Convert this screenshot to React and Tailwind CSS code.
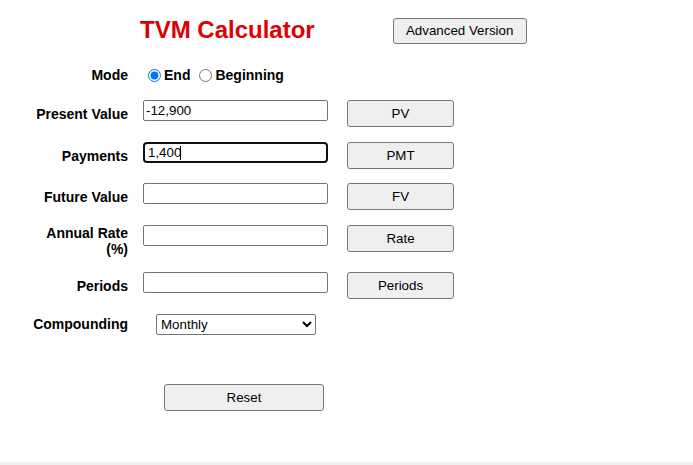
import { useState } from 'react'

const font = { fontFamily: '"Liberation Sans", Arial, sans-serif' }

function Field({ label, value, onChange, button, focused, className = '' }) {
  return (
    <div className={`flex items-start ${className}`}>
      <div className="w-[98px] self-stretch flex items-center justify-end text-right font-bold text-[14px] leading-4 text-black">
        {label}
      </div>
      <div className="relative ml-[15px] flex">
        <input
          type="text"
          value={value}
          onChange={(e) => onChange(e.target.value)}
          className={`block w-[185px] h-[21px] px-[2px] text-[13.33px] text-black bg-white outline-none ${
            focused ? 'border-2 border-[#101010] rounded-[4px] px-[3px]' : 'border border-[#767676] rounded-[2px]'
          }`}
        />
        {focused && <span className="absolute left-[37px] top-[4px] w-px h-[14px] bg-black" />}
      </div>
      <button className="ml-[19px] w-[107px] h-[27px] bg-[#efefef] border border-[#767676] rounded-[3px] text-[13.33px] text-black">
        {button}
      </button>
    </div>
  )
}

export default function App() {
  const [pv, setPv] = useState('-12,900')
  const [pmt, setPmt] = useState('1,400')
  const [fv, setFv] = useState('')
  const [rate, setRate] = useState('')
  const [periods, setPeriods] = useState('')
  const [mode, setMode] = useState('end')

  return (
    <div className="h-[465px] w-[693px] bg-white flex flex-col" style={font}>
      <div className="flex-1 pl-[30px] pt-[16px]">
        <div className="flex items-start">
          <h1 className="ml-[110px] text-[24px] leading-7 font-bold text-[#e00000]">TVM Calculator</h1>
          <button className="ml-[78px] mt-[2px] w-[134px] h-[26px] bg-[#efefef] border border-[#767676] rounded-[3px] text-[13.33px] text-black">
            Advanced Version
          </button>
        </div>

        <div className="mt-[23px] flex items-center h-4">
          <div className="w-[98px] text-right font-bold text-[14px] leading-4">Mode</div>
          <label className="ml-[15px] flex items-center font-bold text-[14px]">
            <input
              type="radio"
              name="mode"
              checked={mode === 'end'}
              onChange={() => setMode('end')}
              className="ml-[5px] mr-[3px] w-[13px] h-[13px]"
            />
            End
          </label>
          <label className="ml-[4px] flex items-center font-bold text-[14px]">
            <input
              type="radio"
              name="mode"
              checked={mode === 'beginning'}
              onChange={() => setMode('beginning')}
              className="ml-[5px] mr-[3px] w-[13px] h-[13px]"
            />
            Beginning
          </label>
        </div>

        <div className="mt-[17px] flex flex-col">
          <Field label="Present Value" value={pv} onChange={setPv} button="PV" />
          <Field label="Payments" value={pmt} onChange={setPmt} button="PMT" focused className="mt-[15px]" />
          <Field label="Future Value" value={fv} onChange={setFv} button="FV" className="mt-[14px]" />
          <Field
            label={<span>Annual Rate<br />(%)</span>}
            value={rate}
            onChange={setRate}
            button="Rate"
            className="mt-[15px] min-h-[31px]"
          />
          <Field label="Periods" value={periods} onChange={setPeriods} button="Periods" className="mt-[15px]" />
          <div className="mt-[15px] flex items-center h-[20px]">
            <div className="w-[98px] text-right font-bold text-[14px] leading-4">Compounding</div>
            <select
              defaultValue="Monthly"
              className="ml-[28px] w-[160px] h-[21px] text-[13.33px] text-black bg-white border border-[#767676] rounded-[2px]"
            >
              <option>Annually</option>
              <option>Semi-Annually</option>
              <option>Quarterly</option>
              <option>Monthly</option>
              <option>Daily</option>
            </select>
          </div>
        </div>

        <button className="ml-[134px] mt-[50px] w-[160px] h-[27px] bg-[#efefef] border border-[#767676] rounded-[3px] text-[13.33px] text-black">
          Reset
        </button>
      </div>
      <div className="h-[3px] bg-[#f0f0f0]" />
    </div>
  )
}
